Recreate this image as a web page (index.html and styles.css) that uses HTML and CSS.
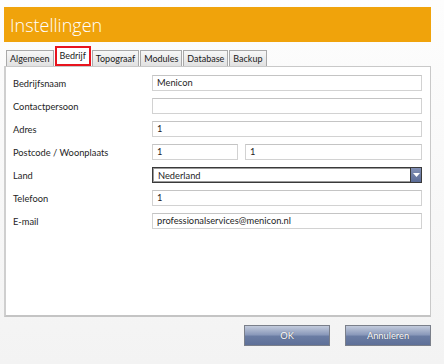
FILE: index.html
```html
<!DOCTYPE html>
<html lang="nl">
<head>
<meta charset="utf-8">
<title>Instellingen</title>
<link rel="stylesheet" href="styles.css">
</head>
<body>
<div class="window">
  <div class="header"><span class="title">Instellingen</span></div>
  <div class="tabs">
    <div class="tab">Algemeen</div>
    <div class="tab active">Bedrijf</div>
    <div class="tab">Topograaf</div>
    <div class="tab">Modules</div>
    <div class="tab">Database</div>
    <div class="tab">Backup</div>
  </div>
  <div class="panel">
    <div class="row">
      <div class="label">Bedrijfsnaam</div>
      <div class="field"><div class="input">Menicon</div></div>
    </div>
    <div class="row">
      <div class="label">Contactpersoon</div>
      <div class="field"><div class="input"></div></div>
    </div>
    <div class="row">
      <div class="label">Adres</div>
      <div class="field"><div class="input">1</div></div>
    </div>
    <div class="row">
      <div class="label">Postcode / Woonplaats</div>
      <div class="field split">
        <div class="input postcode">1</div>
        <div class="input city">1</div>
      </div>
    </div>
    <div class="row">
      <div class="label">Land</div>
      <div class="field">
        <div class="select">
          <span class="select-text">Nederland</span>
          <span class="select-btn">
            <svg width="7" height="4" viewBox="0 0 7 4"><path d="M0 0h7L3.5 4z" fill="#ffffff"/></svg>
          </span>
        </div>
      </div>
    </div>
    <div class="row">
      <div class="label">Telefoon</div>
      <div class="field"><div class="input">1</div></div>
    </div>
    <div class="row">
      <div class="label">E-mail</div>
      <div class="field"><div class="input">professionalservices@menicon.nl</div></div>
    </div>
  </div>
  <div class="buttons">
    <div class="btn">OK</div>
    <div class="btn">Annuleren</div>
  </div>
</div>
</body>
</html>
```
FILE: styles.css
```css
html, body {
  margin: 0;
  padding: 0;
}
body {
  width: 444px;
  height: 364px;
  overflow: hidden;
  background: linear-gradient(#fdfdfd 0%, #f9f9f9 40%, #f3f3f3 100%);
  font-family: "Lato", "Open Sans", sans-serif;
  color: #1e1e1e;
}
.window {
  padding: 7px 13px 0 4px;
}
.header {
  height: 35px;
  background: #f0a30b;
  display: flex;
  align-items: center;
  padding-left: 6px;
}
.title {
  color: #ffffff;
  font-family: "Open Sans", sans-serif;
  font-weight: 300;
  font-size: 18px;
  line-height: 1;
  margin-top: 1px;
}
.tabs {
  display: flex;
  align-items: flex-end;
  margin-top: 4px;
  padding-left: 2px;
  height: 20px;
}
.tab {
  height: 15px;
  border: 1px solid #a9a9a9;
  border-bottom: none;
  background: linear-gradient(#f7f7f7, #e1e1e1);
  font-size: 9px;
  line-height: 15px;
  padding: 0 3px;
  margin-right: 1px;
  color: #1a1a1a;
}
.tab.active {
  height: 16px;
  border: 2px solid #e8141e;
  background: #ffffff;
  line-height: 16px;
  padding: 0 3px;
}
.panel {
  height: 240px;
  background: #ffffff;
  border: 1px solid #c9c9c9;
  border-bottom: 2px solid #c4c4c4;
  border-left: 2px solid #cfcfcf;
  padding: 8px 8px 0 7px;
  display: flex;
  flex-direction: column;
  gap: 7px;
}
.row {
  display: flex;
  align-items: center;
  height: 16px;
}
.label {
  width: 139px;
  font-size: 9.3px;
  color: #1e1e1e;
}
.field {
  flex: 1;
  display: flex;
  height: 16px;
}
.field.split {
  gap: 7px;
}
.input {
  flex: 1;
  box-sizing: border-box;
  height: 16px;
  border: 1px solid #d2d2d2;
  border-top-color: #c4c4c4;
  background: #ffffff;
  font-size: 9.3px;
  line-height: 14px;
  padding-left: 4px;
  color: #1e1e1e;
}
.input.postcode {
  flex: 0 0 86px;
}
.select {
  flex: 1;
  display: flex;
  box-sizing: border-box;
  height: 16px;
  border: 1px solid #3a3a3a;
  background: #ffffff;
}
.select-text {
  flex: 1;
  font-size: 9.3px;
  line-height: 14px;
  padding-left: 4px;
  border: 1px solid #9a9a9a;
  border-right: none;
}
.select-btn {
  width: 10px;
  background: linear-gradient(#8391b6, #5a6b96);
  border-left: 1px solid #3a3a3a;
  display: flex;
  align-items: center;
  justify-content: center;
}
.buttons {
  display: flex;
  justify-content: flex-end;
  gap: 15px;
  margin-top: 8px;
}
.btn {
  width: 86px;
  height: 21px;
  box-sizing: border-box;
  border: 1px solid #7a7f8a;
  background: linear-gradient(#c3cbdc 0%, #8b9abb 45%, #6a7ca3 55%, #5e7098 100%);
  color: #ffffff;
  font-size: 9.3px;
  line-height: 19px;
  text-align: center;
  text-shadow: 0 0 1px rgba(0,0,0,0.5);
}
```
